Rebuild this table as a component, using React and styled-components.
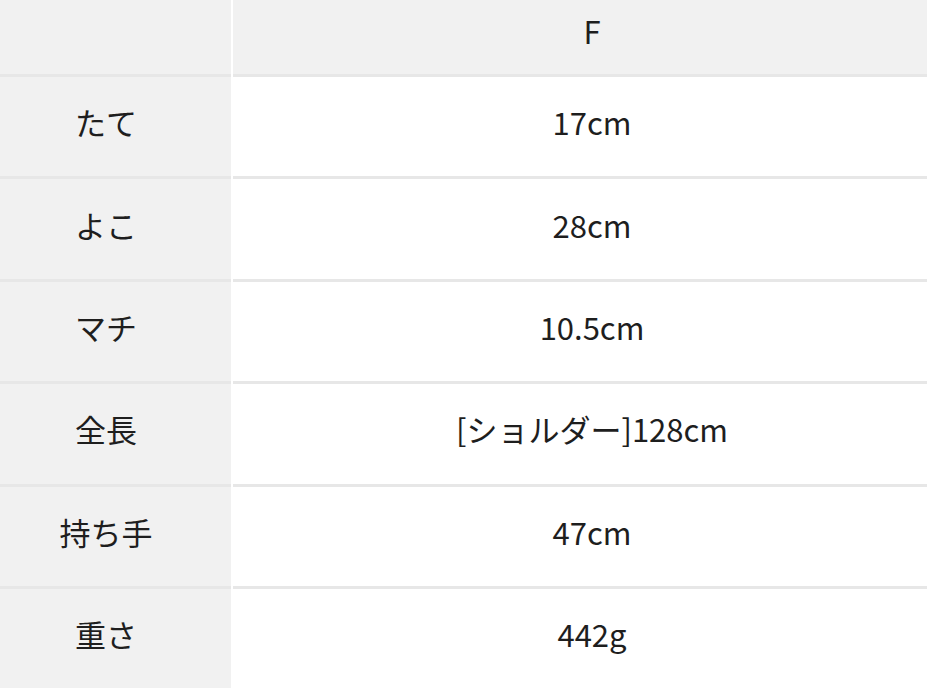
import React from 'react';
import styled, { createGlobalStyle } from 'styled-components';

const GlobalStyle = createGlobalStyle`
  html, body {
    margin: 0;
    padding: 0;
    background: #ffffff;
    overflow: hidden;
  }
  body {
    font-family: "Noto Sans CJK JP", "Noto Sans", sans-serif;
  }
`;

const Table = styled.div`
  display: grid;
  grid-template-columns: 231px 1fr;
  column-gap: 2px;
  width: 927px;
  background: #ffffff;
  color: #1e1e1e;
  font-size: 31px;
`;

const Cell = styled.div`
  display: flex;
  align-items: center;
  justify-content: center;
  box-sizing: border-box;
  height: ${(p) => (p.$head ? '77px' : '102.4px')};
  padding-bottom: ${(p) => (p.$head ? '14px' : '10px')};
  padding-right: ${(p) => (p.$label ? '19px' : '0')};
  padding-left: ${(p) => (p.$label ? '0' : '24px')};
  background: ${(p) => (p.$head || p.$label ? '#f1f1f1' : '#ffffff')};
  border-bottom: 3px solid #e7e7e7;
  white-space: nowrap;
`;

const rows = [
  ['たて', '17cm'],
  ['よこ', '28cm'],
  ['マチ', '10.5cm'],
  ['全長', '[ショルダー]128cm'],
  ['持ち手', '47cm'],
  ['重さ', '442g'],
];

const App = () => {
  return (
    <>
      <GlobalStyle />
      <Table>
        <Cell $head $label></Cell>
        <Cell $head>F</Cell>
        {rows.map(([label, value]) => (
          <React.Fragment key={label}>
            <Cell $label>{label}</Cell>
            <Cell>{value}</Cell>
          </React.Fragment>
        ))}
      </Table>
    </>
  );
};

export default App;
